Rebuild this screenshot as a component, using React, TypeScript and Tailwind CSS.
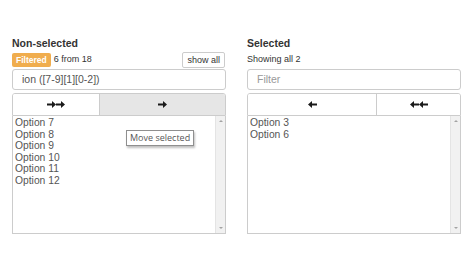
import React from 'react';

const font = { fontFamily: '"Liberation Sans", Arial, sans-serif' };

function Arrow({ dir }: { dir: 'left' | 'right' }) {
  return (
    <svg width="9" height="7" viewBox="0 0 9 7" className={dir === 'left' ? 'rotate-180' : ''}>
      <path d="M0 2.4h5V0l4 3.5-4 3.5V4.6H0z" fill="#1a1a1a" />
    </svg>
  );
}

function Scrollbar() {
  return (
    <div className="w-[10px] h-full bg-[#f1f1f1] border-l border-[#e4e4e4] flex flex-col justify-between items-center py-[4px]">
      <div className="w-0 h-0 border-l-[2px] border-r-[2px] border-b-[2px] border-l-transparent border-r-transparent border-b-[#a3a3a3]" />
      <div className="w-0 h-0 border-l-[2px] border-r-[2px] border-t-[2px] border-l-transparent border-r-transparent border-t-[#a3a3a3]" />
    </div>
  );
}

function Column({
  title,
  info,
  filter,
  buttons,
  options,
}: {
  title: string;
  info: React.ReactNode;
  filter: string;
  buttons: { content: React.ReactNode; width: string; active?: boolean }[];
  options: string[];
}) {
  return (
    <div className="w-[214px] flex flex-col">
      <div className="text-[10.5px] font-bold text-[#333] leading-[12px] h-[12px]">{title}</div>
      <div className="mt-[3px] h-[16px] flex items-center justify-between text-[9px] text-[#333]">{info}</div>
      <div className="mt-[1px] h-[21px] border border-[#cccccc] rounded-[3px] flex items-center px-[9px] text-[10.5px]">
        {filter ? (
          <span className="text-[#555]">{filter}</span>
        ) : (
          <span className="text-[#999]">Filter</span>
        )}
      </div>
      <div className="mt-[3px] h-[23px] flex border border-[#cccccc] rounded-t-[3px] overflow-hidden">
        {buttons.map((b, i) => (
          <div
            key={i}
            className={`${b.width} flex items-center justify-center ${i > 0 ? 'border-l border-[#cccccc]' : ''} ${
              b.active ? 'bg-[#e6e6e6]' : 'bg-white'
            }`}
          >
            {b.content}
          </div>
        ))}
      </div>
      <div className="h-[118px] border border-t-0 border-[#cccccc] flex">
        <div className="flex-1 pl-[2px] pt-[1px] text-[10.3px] leading-[11.6px] text-[#555]">
          {options.map((o) => (
            <div key={o}>{o}</div>
          ))}
        </div>
        <Scrollbar />
      </div>
    </div>
  );
}

export default function App() {
  return (
    <div className="w-[474px] h-[273px] bg-white relative" style={font}>
      <div className="flex gap-[21px] pl-[12px] pt-[37px]">
        <Column
          title="Non-selected"
          info={
            <>
              <div className="flex items-center gap-[3px]">
                <span className="bg-[#f0ad4e] text-white font-bold rounded-[2px] px-[4px] h-[14px] leading-[14px] text-[8.5px]">
                  Filtered
                </span>
                <span>6 from 18</span>
              </div>
              <span className="border border-[#cccccc] rounded-[2px] h-[16px] px-[4px] leading-[14px] text-[9px] text-[#333] mr-[1px]">
                show all
              </span>
            </>
          }
          filter="ion ([7-9][1][0-2])"
          buttons={[
            {
              width: 'w-[86px]',
              content: (
                <span className="flex">
                  <Arrow dir="right" />
                  <Arrow dir="right" />
                </span>
              ),
            },
            { width: 'flex-1', active: true, content: <Arrow dir="right" /> },
          ]}
          options={['Option 7', 'Option 8', 'Option 9', 'Option 10', 'Option 11', 'Option 12']}
        />
        <Column
          title="Selected"
          info={<span>Showing all 2</span>}
          filter=""
          buttons={[
            { width: 'w-[128px]', content: <Arrow dir="left" /> },
            {
              width: 'flex-1',
              content: (
                <span className="flex">
                  <Arrow dir="left" />
                  <Arrow dir="left" />
                </span>
              ),
            },
          ]}
          options={['Option 3', 'Option 6']}
        />
      </div>
      <div
        className="absolute left-[126px] top-[130px] h-[16px] px-[3px] border border-[#8f8f8f] bg-white text-[9px] leading-[14px] text-[#575757] shadow-[1px_2px_2px_rgba(0,0,0,0.25)]"
        style={{ fontFamily: '"Open Sans", "DejaVu Sans", sans-serif' }}
      >
        Move selected
      </div>
    </div>
  );
}
